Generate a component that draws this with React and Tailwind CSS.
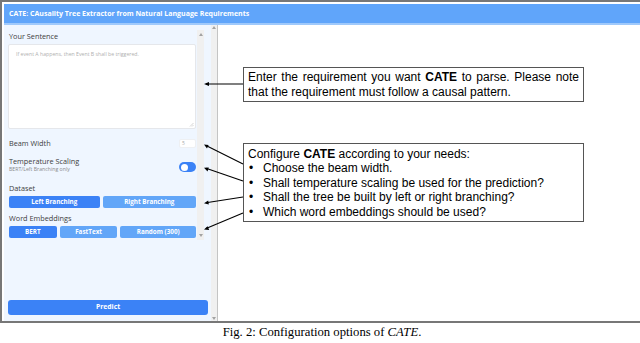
import React from "react";

function Arrow({ dir }) {
  return dir === "up" ? (
    <div className="w-0 h-0 border-l-[2px] border-r-[2px] border-b-[3px] border-l-transparent border-r-transparent border-b-[#a3a3a3]" />
  ) : (
    <div className="w-0 h-0 border-l-[2px] border-r-[2px] border-t-[3px] border-l-transparent border-r-transparent border-t-[#a3a3a3]" />
  );
}

function Btn({ w, dark, children }) {
  return (
    <div
      className={
        "h-[12px] rounded-[2px] flex items-center justify-center text-white font-bold text-[6.3px] leading-none " +
        (dark ? "bg-[#3b82f6]" : "bg-[#62a6f8]")
      }
      style={{ width: w }}
    >
      {children}
    </div>
  );
}

export default function App() {
  return (
    <div className="relative w-[640px] h-[343px] bg-white overflow-hidden font-['Open_Sans',sans-serif]">
      <div className="h-[323px] border-l-2 border-t-2 border-b-2 border-[#777777] pt-[2px] pl-[2px] flex flex-col">
        <div className="h-[21px] shrink-0 bg-[#60a5fa] border-b-2 border-[#9fc9fb] flex items-center pl-[5px] text-white font-bold text-[7px] leading-none">
          CATE: CAusality Tree Extractor from Natural Language Requirements
        </div>
        <div className="flex flex-1 min-h-0">
          <div className="w-[207px] bg-[#eff6ff] flex flex-col">
            <div className="flex h-[210px] mt-[5px] shrink-0">
              <div className="w-[193px] pl-[4px] pr-[1px] flex flex-col text-[#404040]">
                <div className="pl-[1px] pt-[1px] h-[10px] text-[7.3px] leading-[10px]">Your Sentence</div>
                <div className="relative mt-[4px] h-[85px] bg-white border border-[#e5e7eb] rounded-[2px] pl-[7px] pt-[6px] text-[5.2px] leading-[6px] text-[#b0b0b0]">
                  If event A happens, then Event B shall be triggered.
                  <svg className="absolute right-[1px] bottom-[1px]" width="5" height="5" viewBox="0 0 5 5">
                    <path d="M4.5 1 L1 4.5 M4.5 3 L3 4.5" stroke="#bbbbbb" strokeWidth="0.6" />
                  </svg>
                </div>
                <div className="mt-[9px] h-[11px] flex items-center justify-between pl-[1px]">
                  <span className="text-[7.3px] leading-none">Beam Width</span>
                  <div className="w-[17px] h-[9px] bg-white rounded-[2px] border border-[#eef0f3] text-[5px] leading-[7px] pl-[2px] text-[#aaaaaa]">5</div>
                </div>
                <div className="mt-[7px] flex items-end justify-between pl-[1px]">
                  <div className="flex flex-col">
                    <span className="text-[7.3px] leading-[10px]">Temperature Scaling</span>
                    <span className="text-[5.2px] leading-[6px] text-[#8a8a8a]">BERT/Left Branching only</span>
                  </div>
                  <div className="w-[17px] h-[10px] rounded-full bg-[#3b82f6] flex items-center pl-[1.5px]">
                    <div className="w-[7px] h-[7px] rounded-full bg-white" />
                  </div>
                </div>
                <div className="mt-[11px] pl-[1px] h-[10px] text-[7.3px] leading-[10px]">Dataset</div>
                <div className="mt-[3px] flex gap-[3px] pl-[1px]">
                  <Btn w={91} dark>Left Branching</Btn>
                  <Btn w={94}>Right Branching</Btn>
                </div>
                <div className="mt-[5px] pl-[1px] h-[10px] text-[7.3px] leading-[10px]">Word Embeddings</div>
                <div className="mt-[3px] flex gap-[3px] pl-[1px]">
                  <Btn w={48} dark>BERT</Btn>
                  <Btn w={58}>FastText</Btn>
                  <Btn w={76}>Random (300)</Btn>
                </div>
              </div>
              <div className="w-[7px] bg-[#f0f0f0] flex flex-col justify-between items-center py-[3px]">
                <Arrow dir="up" />
                <Arrow dir="down" />
              </div>
            </div>
            <div className="flex-1 flex items-end pb-[6px] pl-[4px] pr-[3px]">
              <div className="w-full h-[15px] rounded-[3px] bg-[#3b82f6] flex items-center justify-center text-white font-bold text-[6.8px] leading-none">
                Predict
              </div>
            </div>
          </div>
          <div className="w-[6px] bg-[#f0f0f0] flex flex-col justify-between items-center py-[1px]">
            <Arrow dir="up" />
            <Arrow dir="down" />
          </div>
          <div className="w-px bg-[#c4c4c4]" />
          <div className="flex-1 bg-white" />
        </div>
      </div>
      <div className="mt-[2px] text-center text-[12.7px] leading-[14px] text-black font-['Liberation_Serif',serif] pl-[4px]">
        Fig. 2: Configuration options of <i>CATE</i>.
      </div>

      <svg className="absolute left-0 top-0 pointer-events-none" width="640" height="343">
        <g stroke="#000" strokeWidth="1.1">
          <line x1="243" y1="84" x2="206" y2="84" />
          <line x1="243" y1="164" x2="206" y2="145.5" />
          <line x1="243" y1="181" x2="206" y2="168.3" />
          <line x1="243" y1="197" x2="206" y2="202.8" />
          <line x1="243" y1="213" x2="206" y2="228.6" />
        </g>
        <g stroke="none" fill="#000">
          <polygon points="204,84 209,82 209,86" />
          <polygon points="204,144.5 208.6,145.0 207.0,148.6" />
          <polygon points="204,167.7 208.8,167.6 207.5,171.4" />
          <polygon points="204,203.2 208.2,200.5 208.8,204.4" />
          <polygon points="204,229.5 207.6,226.3 209.2,229.9" />
        </g>
      </svg>

      <div className="absolute left-[243px] top-[67px] w-[341px] h-[35px] border border-[#555555] bg-white px-[4px] pt-[2px] text-[12px] leading-[15px] text-black text-justify font-['Liberation_Sans',Arial,sans-serif]">
        Enter the requirement you want <b>CATE</b> to parse. Please note that the requirement must follow a causal pattern.
      </div>
      <div className="absolute left-[243px] top-[143px] w-[341px] h-[79px] border border-[#555555] bg-white pl-[4px] pt-[3px] text-[12px] leading-[14.4px] text-black font-['Liberation_Sans',Arial,sans-serif]">
        <div>Configure <b>CATE</b> according to your needs:</div>
        {[
          "Choose the beam width.",
          "Shall temperature scaling be used for the prediction?",
          "Shall the tree be built by left or right branching?",
          "Which word embeddings should be used?",
        ].map((t) => (
          <div key={t} className="flex">
            <span className="w-[15px] pl-[1px]">•</span>
            <span>{t}</span>
          </div>
        ))}
      </div>
    </div>
  );
}
